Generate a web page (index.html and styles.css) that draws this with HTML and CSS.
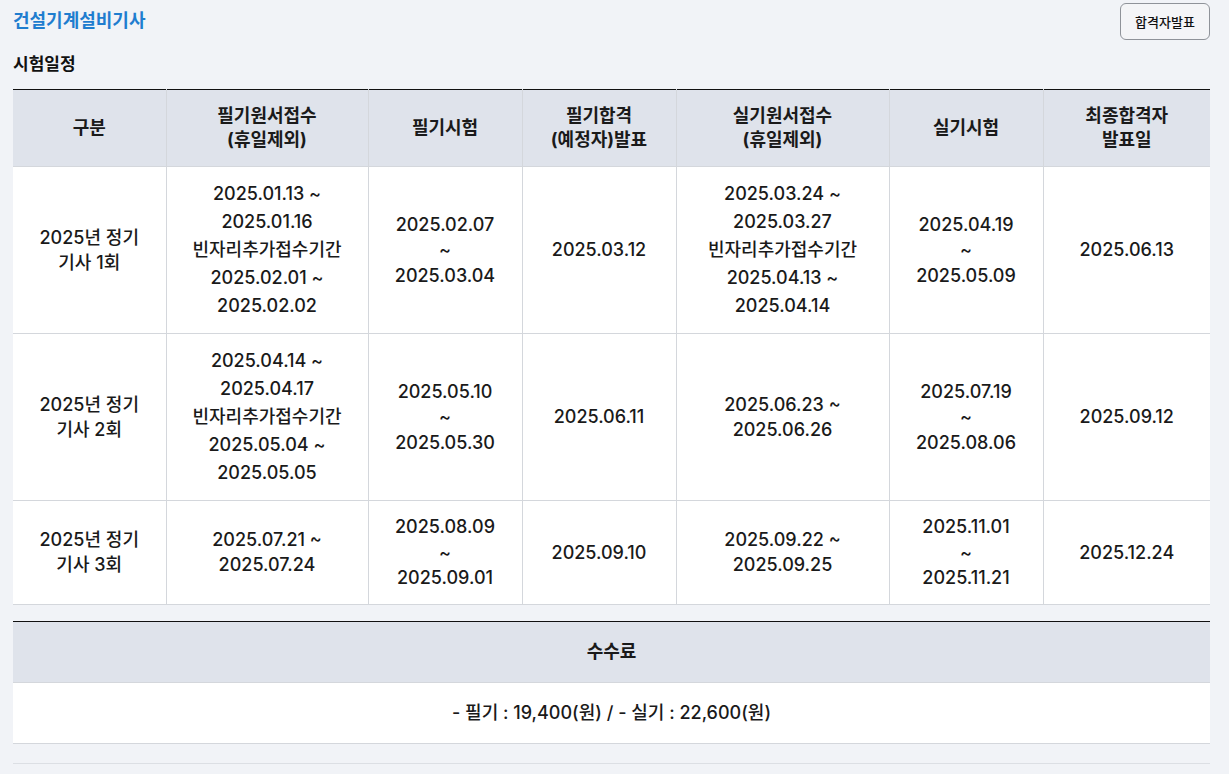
FILE: index.html
```html
<!DOCTYPE html>
<html lang="ko">
<head>
<meta charset="utf-8">
<title>건설기계설비기사</title>
<link rel="stylesheet" href="styles.css">
</head>
<body>
<div class="page">
  <div class="topbar">
    <h1 class="title">건설기계설비기사</h1>
    <button class="btn">합격자발표</button>
  </div>
  <h2 class="section">시험일정</h2>
  <table class="sched">
    <colgroup>
      <col style="width:153px"><col style="width:202px"><col style="width:154px"><col style="width:154px"><col style="width:213px"><col style="width:154px"><col style="width:167px">
    </colgroup>
    <thead>
      <tr>
        <th>구분</th>
        <th>필기원서접수<br>(휴일제외)</th>
        <th>필기시험</th>
        <th>필기합격<br>(예정자)발표</th>
        <th>실기원서접수<br>(휴일제외)</th>
        <th>실기시험</th>
        <th>최종합격자<br>발표일</th>
      </tr>
    </thead>
    <tbody>
      <tr>
        <td>2025년 정기<br>기사 1회</td>
        <td class="tall">2025.01.13 ~<br>2025.01.16<br>빈자리추가접수기간<br>2025.02.01 ~<br>2025.02.02</td>
        <td>2025.02.07<br>~<br>2025.03.04</td>
        <td>2025.03.12</td>
        <td class="tall">2025.03.24 ~<br>2025.03.27<br>빈자리추가접수기간<br>2025.04.13 ~<br>2025.04.14</td>
        <td>2025.04.19<br>~<br>2025.05.09</td>
        <td>2025.06.13</td>
      </tr>
      <tr>
        <td>2025년 정기<br>기사 2회</td>
        <td class="tall">2025.04.14 ~<br>2025.04.17<br>빈자리추가접수기간<br>2025.05.04 ~<br>2025.05.05</td>
        <td>2025.05.10<br>~<br>2025.05.30</td>
        <td>2025.06.11</td>
        <td>2025.06.23 ~<br>2025.06.26</td>
        <td>2025.07.19<br>~<br>2025.08.06</td>
        <td>2025.09.12</td>
      </tr>
      <tr>
        <td>2025년 정기<br>기사 3회</td>
        <td>2025.07.21 ~<br>2025.07.24</td>
        <td>2025.08.09<br>~<br>2025.09.01</td>
        <td>2025.09.10</td>
        <td>2025.09.22 ~<br>2025.09.25</td>
        <td>2025.11.01<br>~<br>2025.11.21</td>
        <td>2025.12.24</td>
      </tr>
    </tbody>
  </table>

  <table class="fee">
    <thead>
      <tr><th>수수료</th></tr>
    </thead>
    <tbody>
      <tr><td>- 필기 : 19,400(원) / - 실기 : 22,600(원)</td></tr>
    </tbody>
  </table>
  <div class="rule"></div>
</div>
</body>
</html>
```

FILE: styles.css
```css
* { box-sizing: border-box; }
html, body {
  margin: 0;
  padding: 0;
  background: #f1f3f7;
}
body {
  font-family: "Inter", "Noto Sans CJK KR", sans-serif;
  color: #1a1a1a;
}
.page {
  padding: 3px 19px 0 13px;
}
.topbar {
  display: flex;
  justify-content: space-between;
  align-items: flex-start;
  height: 43px;
}
.title {
  margin: 5px 0 0 0;
  font-size: 18px;
  font-weight: 700;
  color: #1f7dcf;
  line-height: 25px;
}
.btn {
  width: 90px;
  height: 37px;
  border: 1px solid #8f9399;
  border-radius: 6px;
  background: #f4f5f7;
  font-family: "Inter", "Noto Sans CJK KR", sans-serif;
  font-size: 13px;
  font-weight: 500;
  color: #111;
  padding: 0;
}
.section {
  margin: 6px 0 13px 0;
  font-size: 17px;
  font-weight: 700;
  color: #111;
  line-height: 24px;
}
table {
  width: 100%;
  border-collapse: collapse;
  table-layout: fixed;
  background: #fff;
}
.sched {
  border-top: 1px solid #111;
}
th, td {
  text-align: center;
  vertical-align: middle;
  font-size: 18px;
  border: 1px solid #d4d7dc;
}
th:first-child, td:first-child { border-left: none; }
th:last-child, td:last-child { border-right: none; }
.sched th {
  background: #dfe3eb;
  font-weight: 700;
  line-height: 24px;
  padding: 14px 4px;
  border-top: none;
}
.sched td {
  font-weight: 500;
  line-height: 25.5px;
  padding: 13px 4px;
}
.sched td.tall {
  line-height: 28px;
}
.fee {
  margin-top: 16px;
  border-top: 1px solid #111;
}
.fee th {
  background: #dfe3eb;
  font-weight: 700;
  line-height: 24px;
  padding: 18px 4px 18px;
  border-top: none;
}
.fee td {
  font-weight: 500;
  line-height: 24px;
  padding: 18px 4px 18px;
}
.rule {
  margin-top: 19px;
  height: 1px;
  background: #dcdfe4;
}
```
